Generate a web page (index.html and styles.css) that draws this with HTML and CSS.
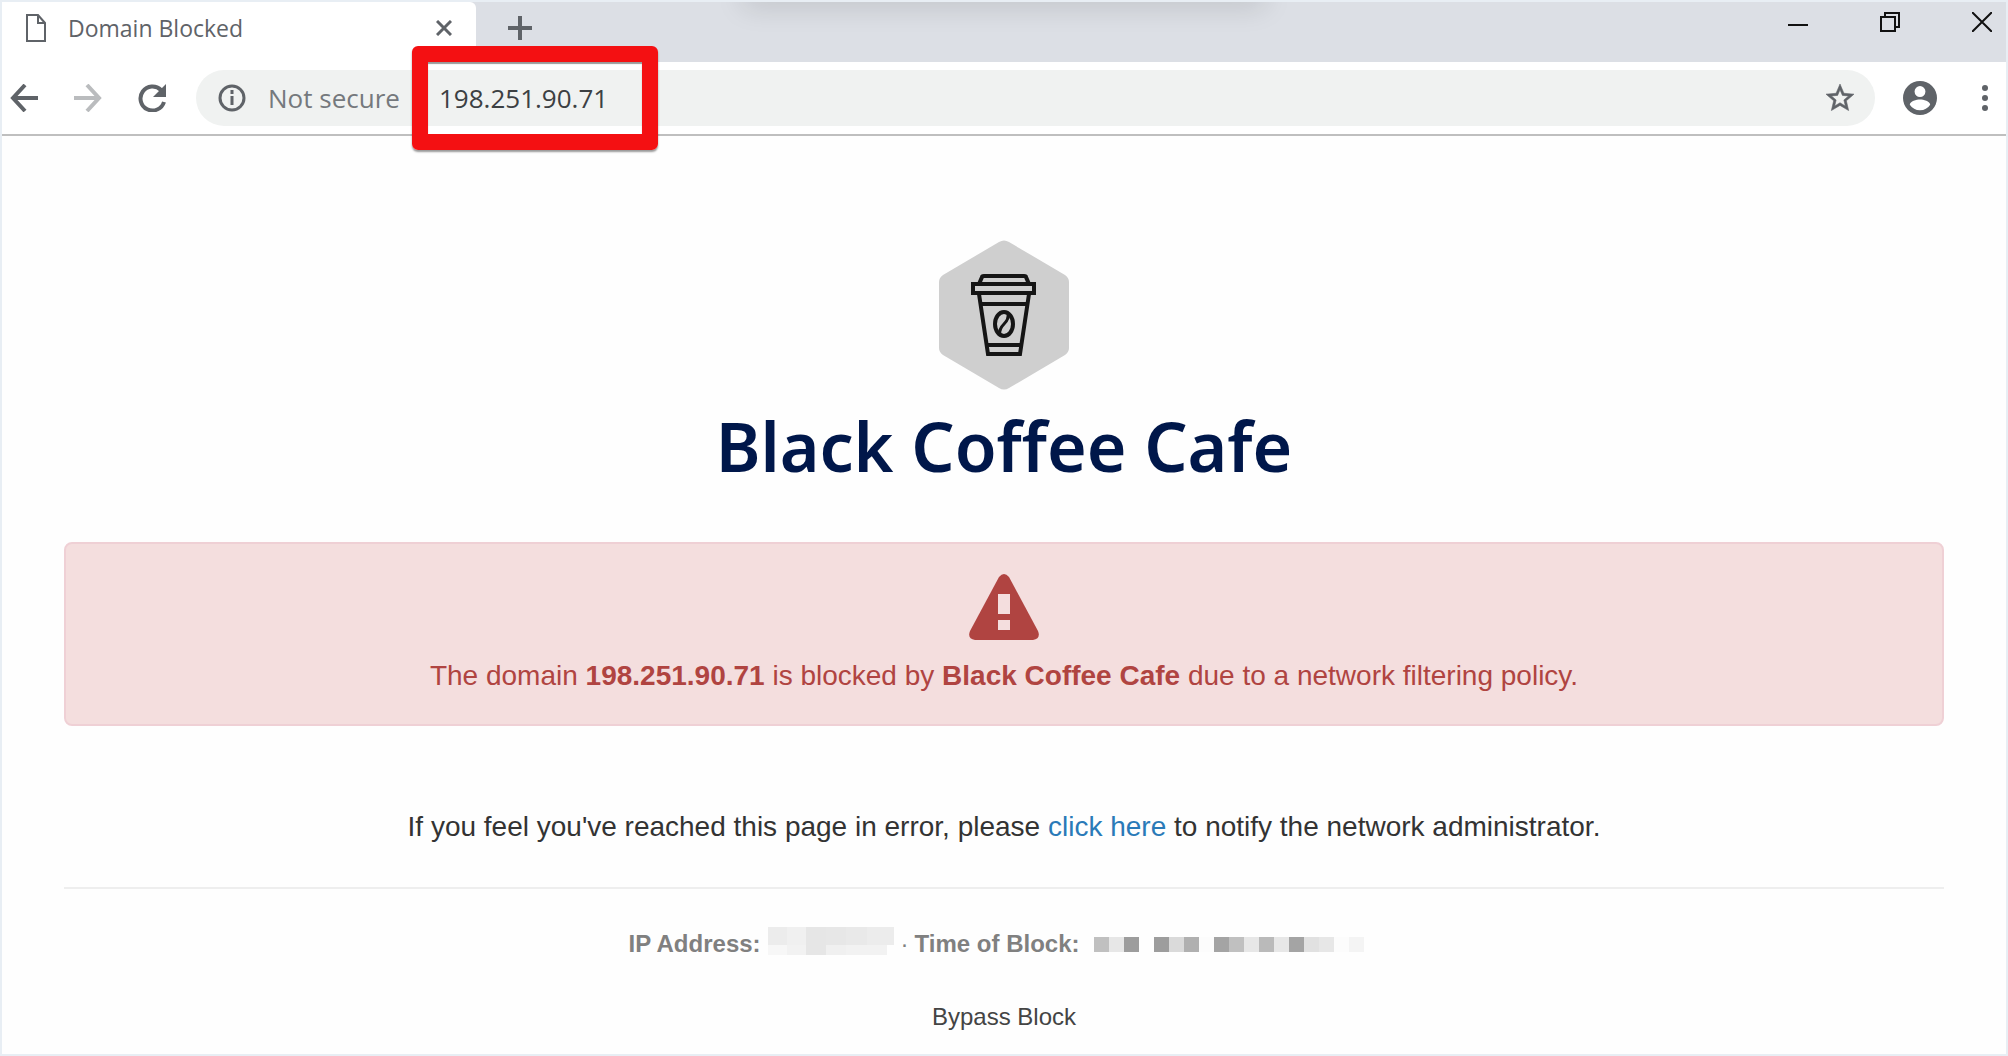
FILE: index.html
```html
<!DOCTYPE html>
<html lang="en">
<head>
    <meta charset="UTF-8">
    <meta name="viewport" content="width=device-width, initial-scale=1.0">
    <title>Domain Blocked</title>
    <link rel="stylesheet" href="styles.css">
</head>
<body>
    <div class="browser">
        <header class="tab-strip">
            <div class="tab">
                <svg class="tab-icon" width="20" height="28" viewBox="0 0 20 28" fill="none" stroke="#5f6368" stroke-width="2">
                    <path d="M1 1h11l7 8v18H1z"/>
                    <path d="M12 1v8h7"/>
                </svg>
                <span class="tab-title">Domain Blocked</span>
                <button class="icon-btn" aria-label="Close tab">
                    <svg width="16" height="16" viewBox="0 0 16 16" stroke="#5f6368" stroke-width="3"><path d="M1 1l14 14M15 1L1 15"/></svg>
                </button>
            </div>
            <button class="icon-btn new-tab" aria-label="New tab">
                <svg width="24" height="24" viewBox="0 0 24 24" stroke="#5f6368" stroke-width="4"><path d="M12 0v24M0 12h24"/></svg>
            </button>
            <div class="window-controls">
                <button class="icon-btn" aria-label="Minimize">
                    <svg width="20" height="20" viewBox="0 0 20 20" stroke="#111" stroke-width="2"><path d="M0 13h20"/></svg>
                </button>
                <button class="icon-btn" aria-label="Restore">
                    <svg width="20" height="20" viewBox="0 0 20 20" fill="none" stroke="#111" stroke-width="2"><path d="M1 5h14v14H1zM5 5V1h14v14h-4"/></svg>
                </button>
                <button class="icon-btn" aria-label="Close">
                    <svg width="20" height="20" viewBox="0 0 20 20" stroke="#111" stroke-width="2"><path d="M0 0l20 20M20 0L0 20"/></svg>
                </button>
            </div>
            <div class="drop-shadow"></div>
        </header>

        <nav class="toolbar">
            <div class="nav-buttons">
                <button class="icon-btn" aria-label="Back">
                    <svg width="28" height="28" viewBox="0 0 28 28" fill="none" stroke="#5f6368" stroke-width="4"><path d="M28 14H3M15 1L3 14l12 13"/></svg>
                </button>
                <button class="icon-btn" aria-label="Forward">
                    <svg width="28" height="28" viewBox="0 0 28 28" fill="none" stroke="#babcbe" stroke-width="4"><path d="M0 14h25M13 1l12 13-12 13"/></svg>
                </button>
                <button class="icon-btn" aria-label="Reload">
                    <svg width="28" height="28" viewBox="0 0 28 28"><path d="M26 18A12 12 0 1 1 23 6" fill="none" stroke="#5f6368" stroke-width="4"/><path d="M28 0v13H15z" fill="#5f6368"/></svg>
                </button>
            </div>
            <div class="omnibox">
                <svg width="28" height="28" viewBox="0 0 28 28" fill="none" stroke="#5f6368"><circle cx="14" cy="14" r="12" stroke-width="3"/><path d="M14 12v9M14 6v4" stroke-width="3"/></svg>
                <label class="security" for="url">Not secure</label>
                <div class="url-wrap">
                    <input class="url" id="url" type="text" value="198.251.90.71">
                    <div class="highlight"></div>
                </div>
                <button class="icon-btn star" aria-label="Bookmark this page">
                    <svg width="28" height="28" viewBox="2 2 20 20" fill="#5f6368" stroke="#5f6368" stroke-width="0.4"><path d="M22 9.24l-7.19-.62L12 2 9.19 8.63 2 9.24l5.46 4.73L5.82 21 12 17.27 18.18 21l-1.63-7.03L22 9.24zM12 15.4l-3.76 2.27 1-4.28-3.32-2.88 4.38-.38L12 6.1l1.71 4.04 4.38.38-3.32 2.88 1 4.28L12 15.4z"/></svg>
                </button>
            </div>
            <button class="icon-btn" aria-label="Profile">
                <svg width="34" height="34" viewBox="2 2 20 20" fill="#5f6368"><path d="M12 2a10 10 0 1 0 0 20 10 10 0 0 0 0-20zm0 3a3.2 3.2 0 1 1 0 6.4 3.2 3.2 0 0 1 0-6.400zm0 14.200a7.200 7.200 0 0 1-6-3.220c.03-1.990 4-3.080 6-3.080s5.970 1.090 6 3.080a7.200 7.200 0 0 1-6 3.220z"/></svg>
            </button>
            <button class="icon-btn menu" aria-label="Menu">
                <svg width="6" height="26" viewBox="0 0 6 26" fill="#5f6368"><circle cx="3" cy="3" r="3"/><circle cx="3" cy="13" r="3"/><circle cx="3" cy="23" r="3"/></svg>
            </button>
        </nav>

        <main class="page">
            <svg class="logo" width="130" height="150" viewBox="0 0 130 150">
                <path d="M60 2q5-3 10 0l56 33q4 3 4 7v66q0 4-4 7l-56 33q-5 3-10 0L4 115q-4-3-4-7V42q0-4 4-7z" fill="#cfcfcf"/>
                <g fill="none" stroke="#151515" stroke-width="4">
                    <path d="M40 44l3-7q0-1 2-1h40q2 0 2 1l3 7"/>
                    <path d="M34 44h61v9H34z"/>
                    <path d="M40 54l9 60h32l9-60"/>
                    <path d="M42 64h46M48 105h34"/>
                    <ellipse cx="65" cy="84" rx="9" ry="12"/>
                    <path d="M69 74q1 5-4 10t-4 10" stroke-width="3"/>
                </g>
            </svg>
            <h1>Black Coffee Cafe</h1>

            <div class="alert" role="alert">
                <svg width="70" height="66" viewBox="0 0 70 66">
                    <path d="M30 3q5-6 10 0l29 54q3 8-5 9H6q-8-1-5-9z" fill="#b04441"/>
                    <path d="M29 20h12v20H29zM29 46h12v10H29z" fill="#f4dede"/>
                </svg>
                <p>The domain <strong>198.251.90.71</strong> is blocked by <strong>Black Coffee Cafe</strong> due to a network filtering policy.</p>
            </div>

            <p class="notice">If you feel you've reached this page in error, please <a href="#">click here</a> to notify the network administrator.</p>

            <hr>

            <div class="details">
                <strong>IP Address:</strong>
                <svg class="redacted-ip" width="126" height="28" viewBox="0 0 126 28" shape-rendering="crispEdges">
                    <path fill="#ececec" d="M0 0h19v18H0zM99 0h27v18H99z"/>
                    <path fill="#f0f0f0" d="M19 0h19v18H19zM58 18h20v10H58z"/>
                    <path fill="#e6e6e6" d="M38 0h20v28H38z"/>
                    <path fill="#e7e7e7" d="M58 0h20v18H58z"/>
                    <path fill="#e9e9e9" d="M78 0h21v18H78z"/>
                    <path fill="#f7f7f7" d="M0 18h19v10H0z"/>
                    <path fill="#f2f2f2" d="M19 18h19v10H19zM78 18h41v10H78z"/>
                </svg>
                <span class="dot">·</span>
                <strong>Time of Block:</strong>
                <svg class="redacted-time" width="285" height="15" viewBox="0 0 285 15" shape-rendering="crispEdges">
                    <path fill="#c0c0c0" d="M0 0h15v15H0zM135 0h15v15h-15z"/>
                    <path fill="#e7e7e7" d="M15 0h15v15H15zM150 0h15v15h-15zM180 0h15v15h-15zM225 0h15v15h-15z"/>
                    <path fill="#9d9d9d" d="M30 0h15v15H30zM60 0h15v15H60z"/>
                    <path fill="#dadada" d="M75 0h15v15H75z"/>
                    <path fill="#b0b0b0" d="M90 0h15v15H90z"/>
                    <path fill="#fcfcfc" d="M105 0h15v15h-15zM240 0h15v15h-15z"/>
                    <path fill="#a4a4a4" d="M120 0h15v15h-15zM195 0h15v15h-15z"/>
                    <path fill="#bababa" d="M165 0h15v15h-15z"/>
                    <path fill="#e1e1e1" d="M210 0h15v15h-15z"/>
                    <path fill="#f4f4f4" d="M255 0h15v15h-15z"/>
                </svg>
            </div>

            <a class="bypass" href="#">Bypass Block</a>
        </main>
    </div>
</body>
</html>
```
FILE: styles.css
```css
* {
    margin: 0;
    padding: 0;
    box-sizing: border-box;
}

body {
    font-family: "Liberation Sans", Arial, sans-serif;
    background: #fefefe;
    color: #333;
}

svg {
    display: block;
    flex-shrink: 0;
}

.browser {
    display: flex;
    flex-direction: column;
    min-height: 100vh;
    border: 2px solid #e8eef4;
}

.icon-btn {
    display: flex;
    background: none;
    border: none;
    cursor: pointer;
}

/* Tabs */
.tab-strip {
    position: relative;
    display: flex;
    height: 60px;
    background: #dcdfe5;
    overflow: hidden;
    font-family: "Open Sans", "Segoe UI", sans-serif;
}

.tab {
    display: flex;
    align-items: center;
    width: 474px;
    padding: 0 24px 8px;
    background: #fff;
    border-top-right-radius: 6px;
}

.tab-title {
    flex: 1;
    margin-left: 22px;
    font-size: 23px;
    line-height: 32px;
    color: #5f6368;
}

.new-tab {
    padding: 14px 32px;
}

.window-controls {
    display: flex;
    align-items: flex-start;
    gap: 72px;
    margin-left: auto;
    padding: 10px 14px;
}

.drop-shadow {
    position: absolute;
    top: -20px;
    left: 37%;
    width: 26%;
    height: 20px;
    box-shadow: 0 4px 28px rgba(0, 0, 0, 0.15);
}

/* Toolbar */
.toolbar {
    display: flex;
    align-items: center;
    height: 74px;
    padding: 0 18px 0 8px;
    background: #fff;
    border-bottom: 2px solid #bfbfbf;
    font-family: "Open Sans", "Segoe UI", sans-serif;
}

.nav-buttons {
    display: flex;
    gap: 36px;
}

.omnibox {
    flex: 1;
    display: flex;
    align-items: center;
    height: 56px;
    margin: 0 28px 0 30px;
    padding: 0 21px 0 22px;
    background: #f0f2f1;
    border-radius: 28px;
}

.security {
    width: 144px;
    margin-left: 22px;
    font-size: 26px;
    line-height: 36px;
    color: #75797d;
    white-space: nowrap;
}

.url-wrap {
    position: relative;
    display: flex;
    align-items: center;
    width: 246px;
    height: 56px;
}

.url {
    width: 100%;
    padding: 0 27px;
    background: none;
    border: none;
    outline: none;
    font-family: inherit;
    font-size: 26px;
    line-height: 36px;
    color: #3c4043;
}

.highlight {
    position: absolute;
    inset: -24px 0;
    border: 16px solid #f41012;
    border-radius: 6px;
    box-shadow: 0 2px 2px rgba(0, 0, 0, 0.4), inset 0 2px 1px rgba(0, 0, 0, 0.4);
    pointer-events: none;
}

.star {
    margin-left: auto;
}

.menu {
    margin-left: 45px;
}

/* Block page */
.page {
    display: flex;
    flex-direction: column;
    align-items: center;
    padding: 104px 62px 0;
}

h1 {
    margin-top: 8px;
    font-family: "Noto Sans", sans-serif;
    font-size: 68px;
    font-weight: 600;
    line-height: 96px;
    color: #00174a;
}

.alert {
    display: flex;
    flex-direction: column;
    align-items: center;
    gap: 16px;
    width: 100%;
    margin-top: 48px;
    padding: 30px 24px 28px;
    background: #f4dede;
    border: 2px solid #efd0d5;
    border-radius: 8px;
    color: #b04441;
}

.alert p,
.notice {
    font-size: 28px;
    line-height: 40px;
    text-align: center;
}

.notice {
    margin-top: 81px;
}

.notice a {
    color: #2a7ab8;
    text-decoration: none;
}

hr {
    width: 100%;
    margin: 40px 0 38px;
    border: none;
    border-top: 2px solid #eee;
}

.details {
    display: flex;
    align-items: center;
    font-size: 24px;
    line-height: 32px;
    color: #808080;
}

.redacted-ip {
    margin: 0 7px 6px;
}

.dot {
    margin-right: 6px;
}

.redacted-time {
    margin-left: 15px;
}

.bypass {
    margin-top: 40px;
    font-size: 24px;
    line-height: 32px;
    color: #444;
    text-decoration: none;
}
```
